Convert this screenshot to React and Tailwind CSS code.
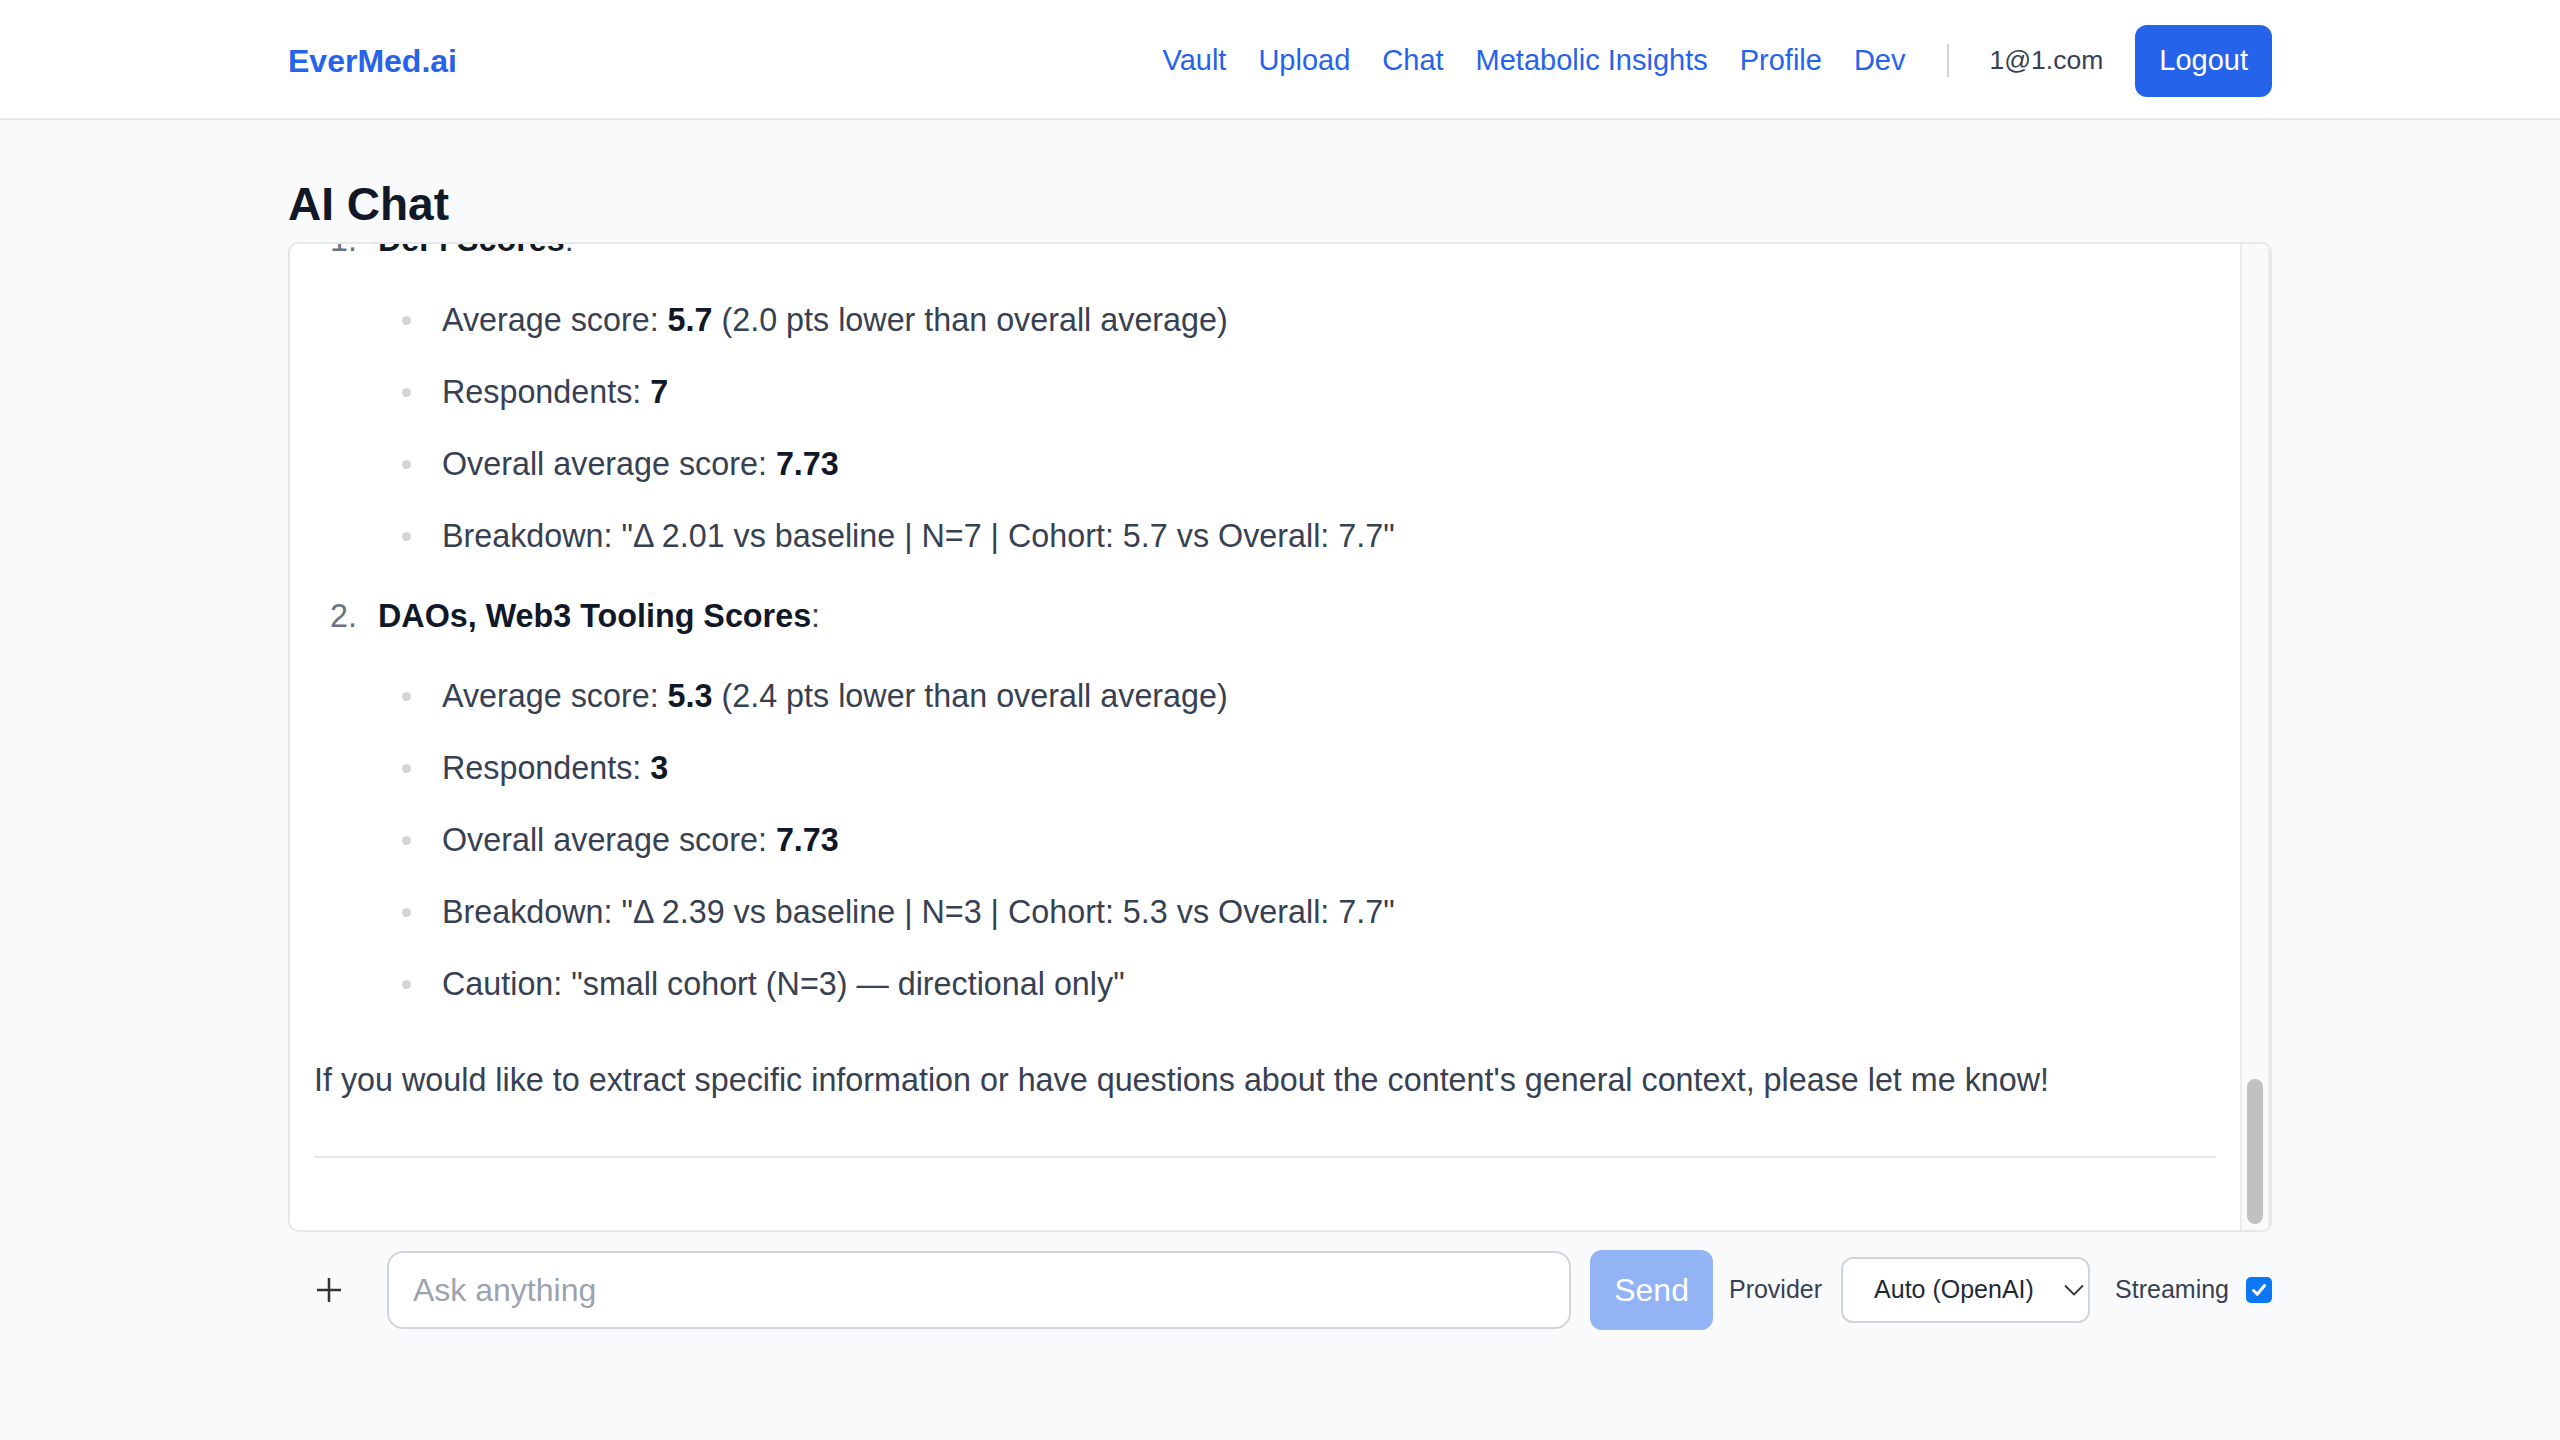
const navLinks = ["Vault", "Upload", "Chat", "Metabolic Insights", "Profile", "Dev"];

function SubList({ items }) {
  return (
    <ul className="mt-[32px] flex flex-col gap-[24px]">
      {items.map((item, i) => (
        <li key={i} className="flex">
          <span className="flex w-[64px] shrink-0 items-center pl-[24px]">
            <span className="size-[9px] rounded-full bg-[#d1d5db]" />
          </span>
          <span>{item}</span>
        </li>
      ))}
    </ul>
  );
}

function Header() {
  return (
    <header className="h-[120px] border-b-2 border-[#e5e7eb] bg-white">
      <div className="mx-auto flex h-full max-w-[2048px] items-center justify-between px-8 pt-[3px]">
        <span className="text-[32px] font-bold text-[#2563eb]">EverMed.ai</span>
        <nav className="flex items-center">
          <div className="flex items-center gap-8">
            {navLinks.map((l) => (
              <a key={l} href="#" className="text-[29px] text-[#2563eb]">
                {l}
              </a>
            ))}
          </div>
          <span className="ml-[42px] mr-[40px] h-[33px] w-[2px] bg-[#d1d5db]" />
          <span className="text-[26.5px] text-[#374151]">1@1.com</span>
          <button className="ml-8 h-[72px] rounded-[12px] bg-[#2563eb] px-6 text-[29px] text-white">
            Logout
          </button>
        </nav>
      </div>
    </header>
  );
}

export default function App() {
  return (
    <div className="min-h-screen bg-[#f9fafb] font-['Liberation_Sans',Arial,sans-serif]">
      <Header />

      <main className="mx-auto max-w-[2048px] px-8 pt-[56px]">
        <h1 className="mb-[10px] text-[46px] font-bold leading-[56px] text-[#111827]">AI Chat</h1>

        {/* Messages */}
        <div className="flex h-[990px] overflow-hidden rounded-[10px] border-2 border-[#e5e7eb] bg-white">
          <div className="flex min-w-0 flex-1 flex-col justify-end overflow-hidden px-[24px] pb-[72px]">
            <div className="border-b-2 border-[#e5e7eb] pb-[52px] text-[32.3px] leading-[48px] text-[#374151]">
              <p className="mb-[32px]">
                Here is a summary of the cohort scores compared to the overall average:
              </p>
              <ol>
                <li>
                  <div className="flex">
                    <span className="w-[64px] shrink-0 pl-[16px] text-[#6b7280]">1.</span>
                    <span>
                      <strong className="font-bold text-[#111827]">DeFi Scores</strong>:
                    </span>
                  </div>
                  <div className="pl-[64px]">
                    <SubList
                      items={[
                        <>Average score: <b className="text-[#111827]">5.7</b> (2.0 pts lower than overall average)</>,
                        <>Respondents: <b className="text-[#111827]">7</b></>,
                        <>Overall average score: <b className="text-[#111827]">7.73</b></>,
                        <>Breakdown: "Δ 2.01 vs baseline | N=7 | Cohort: 5.7 vs Overall: 7.7"</>,
                      ]}
                    />
                  </div>
                </li>
                <li className="mt-[32px]">
                  <div className="flex">
                    <span className="w-[64px] shrink-0 pl-[16px] text-[#6b7280]">2.</span>
                    <span>
                      <strong className="font-bold text-[#111827]">DAOs, Web3 Tooling Scores</strong>:
                    </span>
                  </div>
                  <div className="pl-[64px]">
                    <SubList
                      items={[
                        <>Average score: <b className="text-[#111827]">5.3</b> (2.4 pts lower than overall average)</>,
                        <>Respondents: <b className="text-[#111827]">3</b></>,
                        <>Overall average score: <b className="text-[#111827]">7.73</b></>,
                        <>Breakdown: "Δ 2.39 vs baseline | N=3 | Cohort: 5.3 vs Overall: 7.7"</>,
                        <>Caution: "small cohort (N=3) — directional only"</>,
                      ]}
                    />
                  </div>
                </li>
              </ol>
              <p className="mt-[48px]">
                If you would like to extract specific information or have questions about the content's general
                context, please let me know!
              </p>
            </div>
          </div>

          {/* scrollbar */}
          <div className="flex w-[30px] shrink-0 flex-col items-center justify-end border-x-2 border-[#ececec] bg-[#fafafa] pb-[6px]">
            <div className="h-[145px] w-[16px] rounded-full bg-[#c1c1c1]" />
          </div>
        </div>

        {/* Composer */}
        <div className="mt-[18px] flex items-center">
          <button className="flex h-[80px] w-[82px] shrink-0 items-center justify-center">
            <svg width="24" height="24" viewBox="0 0 24 24">
              <path d="M12 0V24M0 12H24" stroke="#333" strokeWidth="2.5" />
            </svg>
          </button>
          <input
            className="ml-[17px] h-[78px] min-w-0 flex-1 rounded-[16px] border-2 border-[#d1d5db] bg-white px-6 text-[32px] text-[#111827] outline-none placeholder:text-[#9ca3af]"
            placeholder="Ask anything"
          />
          <button className="ml-[19px] h-[80px] shrink-0 rounded-[12px] bg-[#93b4f4] px-6 text-[32px] text-white">
            Send
          </button>
          <span className="ml-[16px] text-[25px] text-[#374151]">Provider</span>
          <button className="ml-[19px] flex h-[66px] w-[249px] shrink-0 items-center justify-between rounded-[12px] border-2 border-[#d1d5db] bg-white pl-[31px] pr-[4px] text-[25px] text-[#1f2937]">
            <span>Auto (OpenAI)</span>
            <svg width="20" height="12" viewBox="0 0 20 12">
              <path d="M1 1.5L10 10.5L19 1.5" fill="none" stroke="#333" strokeWidth="1.8" />
            </svg>
          </button>
          <span className="ml-[25px] text-[25px] text-[#374151]">Streaming</span>
          <span className="ml-[17px] flex size-[26px] shrink-0 items-center justify-center rounded-[5px] bg-[#0a77f6]">
            <svg width="18" height="18" viewBox="0 0 18 18">
              <path d="M3.5 9.5L7.3 13.2L14.5 4.5" fill="none" stroke="white" strokeWidth="3" strokeLinecap="round" strokeLinejoin="round" />
            </svg>
          </span>
        </div>
      </main>
    </div>
  );
}
